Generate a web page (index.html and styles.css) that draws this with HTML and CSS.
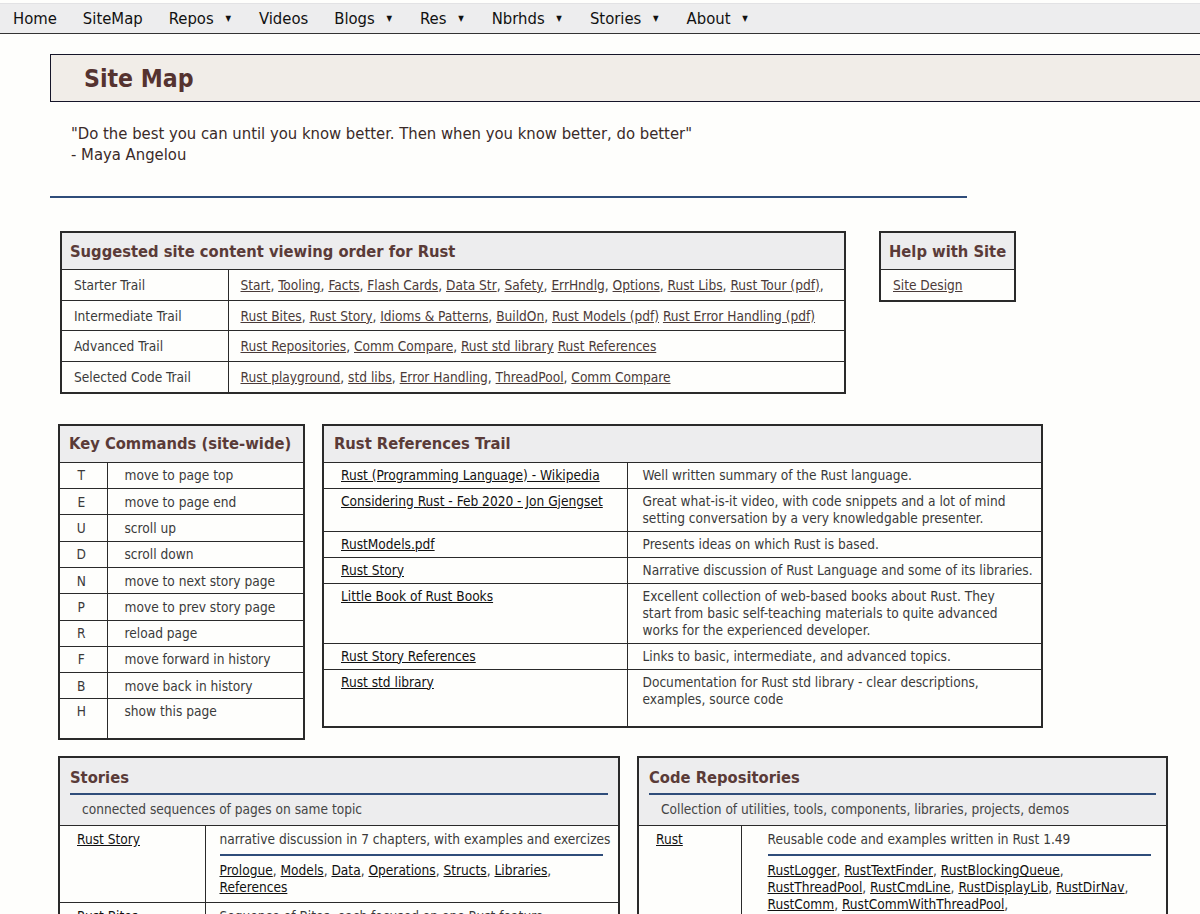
FILE: index.html
```html
<!DOCTYPE html>
<html lang="en">
<head>
<meta charset="utf-8">
<title>Site Map</title>
<link rel="stylesheet" href="styles.css">
</head>
<body>
<nav class="topnav">
  <a class="nav-item" href="#">Home</a>
  <a class="nav-item" href="#">SiteMap</a>
  <a class="nav-item" href="#">Repos <span class="caret">&#9660;</span></a>
  <a class="nav-item" href="#">Videos</a>
  <a class="nav-item" href="#">Blogs <span class="caret">&#9660;</span></a>
  <a class="nav-item" href="#">Res <span class="caret">&#9660;</span></a>
  <a class="nav-item" href="#">Nbrhds <span class="caret">&#9660;</span></a>
  <a class="nav-item" href="#">Stories <span class="caret">&#9660;</span></a>
  <a class="nav-item" href="#">About <span class="caret">&#9660;</span></a>
</nav>
<main class="page">
  <header class="title-box"><h1>Site Map</h1></header>
  <div class="quote">"Do the best you can until you know better. Then when you know better, do better"<br>- Maya Angelou</div>
  <hr class="rule">

  <div class="row row-first">
    <table class="box trail">
      <colgroup><col class="col-trail-1"><col></colgroup>
      <tr><th colspan="2">Suggested site content viewing order for Rust</th></tr>
      <tr><td class="c1">Starter Trail</td><td class="c2"><a href="#">Start</a>, <a href="#">Tooling</a>, <a href="#">Facts</a>, <a href="#">Flash Cards</a>, <a href="#">Data Str</a>, <a href="#">Safety</a>, <a href="#">ErrHndlg</a>, <a href="#">Options</a>, <a href="#">Rust Libs</a>, <a href="#">Rust Tour (pdf)</a>,</td></tr>
      <tr><td class="c1">Intermediate Trail</td><td class="c2"><a href="#">Rust Bites</a>, <a href="#">Rust Story</a>, <a href="#">Idioms &amp; Patterns</a>, <a href="#">BuildOn</a>, <a href="#">Rust Models (pdf)</a> <a href="#">Rust Error Handling (pdf)</a></td></tr>
      <tr><td class="c1">Advanced Trail</td><td class="c2"><a href="#">Rust Repositories</a>, <a href="#">Comm Compare</a>, <a href="#">Rust std library</a> <a href="#">Rust References</a></td></tr>
      <tr><td class="c1">Selected Code Trail</td><td class="c2"><a href="#">Rust playground</a>, <a href="#">std libs</a>, <a href="#">Error Handling</a>, <a href="#">ThreadPool</a>, <a href="#">Comm Compare</a></td></tr>
    </table>
    <table class="box help">
      <tr><th>Help with Site</th></tr>
      <tr><td class="c2"><a href="#">Site Design</a></td></tr>
    </table>
  </div>

  <div class="row row-second">
    <table class="box keys">
      <colgroup><col class="col-key-1"><col></colgroup>
      <tr><th colspan="2">Key Commands (site-wide)</th></tr>
      <tr><td class="k">T</td><td class="kd">move to page top</td></tr>
      <tr><td class="k">E</td><td class="kd">move to page end</td></tr>
      <tr><td class="k">U</td><td class="kd">scroll up</td></tr>
      <tr><td class="k">D</td><td class="kd">scroll down</td></tr>
      <tr><td class="k">N</td><td class="kd">move to next story page</td></tr>
      <tr><td class="k">P</td><td class="kd">move to prev story page</td></tr>
      <tr><td class="k">R</td><td class="kd">reload page</td></tr>
      <tr><td class="k">F</td><td class="kd">move forward in history</td></tr>
      <tr><td class="k">B</td><td class="kd">move back in history</td></tr>
      <tr><td class="k last">H</td><td class="kd last">show this page</td></tr>
    </table>
    <table class="box refs">
      <colgroup><col class="col-ref-1"><col></colgroup>
      <tr><th colspan="2">Rust References Trail</th></tr>
      <tr><td class="r1"><a class="dark" href="#">Rust (Programming Language) - Wikipedia</a></td><td class="r2">Well written summary of the Rust language.</td></tr>
      <tr><td class="r1"><a class="dark" href="#">Considering Rust - Feb 2020 - Jon Gjengset</a></td><td class="r2">Great what-is-it video, with code snippets and a lot of mind<br>setting conversation by a very knowledgable presenter.</td></tr>
      <tr><td class="r1"><a class="dark" href="#">RustModels.pdf</a></td><td class="r2">Presents ideas on which Rust is based.</td></tr>
      <tr><td class="r1"><a class="dark" href="#">Rust Story</a></td><td class="r2">Narrative discussion of Rust Language and some of its libraries.</td></tr>
      <tr><td class="r1"><a class="dark" href="#">Little Book of Rust Books</a></td><td class="r2">Excellent collection of web-based books about Rust. They<br>start from basic self-teaching materials to quite advanced<br>works for the experienced developer.</td></tr>
      <tr><td class="r1"><a class="dark" href="#">Rust Story References</a></td><td class="r2">Links to basic, intermediate, and advanced topics.</td></tr>
      <tr><td class="r1 last"><a class="dark" href="#">Rust std library</a></td><td class="r2 last">Documentation for Rust std library - clear descriptions,<br>examples, source code</td></tr>
    </table>
  </div>

  <div class="row row-third">
    <table class="box group stories">
      <colgroup><col class="col-story-1"><col></colgroup>
      <tr><th colspan="2"><div class="gtitle">Stories</div><div class="gsub">connected sequences of pages on same topic</div></th></tr>
      <tr><td class="g1"><a class="dark" href="#">Rust Story</a></td><td class="g2"><div class="gdesc">narrative discussion in 7 chapters, with examples and exercizes</div><div class="glinks"><a class="dark" href="#">Prologue</a>, <a class="dark" href="#">Models</a>, <a class="dark" href="#">Data</a>, <a class="dark" href="#">Operations</a>, <a class="dark" href="#">Structs</a>, <a class="dark" href="#">Libraries</a>, <a class="dark" href="#">References</a></div></td></tr>
      <tr><td class="g1"><a class="dark" href="#">Rust Bites</a></td><td class="g2"><div class="gdesc">Sequence of Bites, each focused on one Rust feature</div></td></tr>
    </table>
    <table class="box group repos">
      <colgroup><col class="col-repo-1"><col></colgroup>
      <tr><th colspan="2"><div class="gtitle">Code Repositories</div><div class="gsub">Collection of utilities, tools, components, libraries, projects, demos</div></th></tr>
      <tr><td class="g1"><a class="dark" href="#">Rust</a></td><td class="g2"><div class="gdesc">Reusable code and examples written in Rust 1.49</div><div class="glinks"><a class="dark" href="#">RustLogger</a>, <a class="dark" href="#">RustTextFinder</a>, <a class="dark" href="#">RustBlockingQueue</a>, <a class="dark" href="#">RustThreadPool</a>, <a class="dark" href="#">RustCmdLine</a>, <a class="dark" href="#">RustDisplayLib</a>, <a class="dark" href="#">RustDirNav</a>, <a class="dark" href="#">RustComm</a>, <a class="dark" href="#">RustCommWithThreadPool</a>,</div></td></tr>
    </table>
  </div>
</main>
</body>
</html>
```

FILE: styles.css
```css
html {
  overflow-x: hidden;
}
body {
  margin: 0;
  background: #fefefc;
  font-family: "DejaVu Sans Condensed", "DejaVu Sans", sans-serif;
  color: #333;
}
.topnav {
  display: flex;
  align-items: center;
  height: 29px;
  margin-top: 3px;
  border-top: 1px solid #e2e2e4;
  border-bottom: 1px solid #333;
  background: #ededee;
}
.nav-item {
  font-size: 16.5px;
  color: #111;
  text-decoration: none;
  padding: 0 13px;
  line-height: 29px;
  white-space: nowrap;
}
.caret {
  font-size: 8px;
  vertical-align: 3px;
  margin-left: 7px;
  margin-right: 2px;
}
.page {
  padding-left: 50px;
}
.title-box {
  margin-top: 20px;
  height: 46px;
  width: 1200px;
  background: #f1ede8;
  border: 1px solid #151528;
  display: flex;
  align-items: center;
}
.title-box h1 {
  margin: 0 0 0 33px;
  font-size: 24.6px;
  font-weight: bold;
  color: #553330;
}
.quote {
  margin: 21px 0 0 21px;
  font-size: 16.5px;
  line-height: 21px;
  color: #3a2a28;
}
.rule {
  margin: 31px 0 0 0;
  width: 917px;
  border: 0;
  height: 2px;
  background: #2f4d7a;
}
.row {
  display: flex;
  align-items: flex-start;
}
.row-first {
  margin-top: 33px;
  margin-left: 10px;
  gap: 33px;
}
.row-second {
  margin-top: 30px;
  margin-left: 8px;
  gap: 17px;
}
.row-third {
  margin-top: 16px;
  margin-left: 8px;
  gap: 17px;
}
.box {
  border-collapse: collapse;
  table-layout: fixed;
  border: 2px solid #2a2a2a;
  background: #fefefc;
  font-size: 13.6px;
  color: #3a3a3a;
}
.box th {
  background: #ededee;
  color: #5a3b38;
  font-size: 16.4px;
  font-weight: bold;
  text-align: left;
  height: 36px;
  padding: 0 8px;
  white-space: nowrap;
  border-bottom: 1px solid #2a2a2a;
}
.box td {
  border: 1px solid #2a2a2a;
  vertical-align: top;
}
.box a {
  color: #4a3a38;
}
.box a.dark {
  color: #111;
}
.trail {
  width: 786px;
}
.col-trail-1 {
  width: 167px;
}
.trail td {
  height: 29.7px;
  padding: 0 12px;
  vertical-align: middle;
  white-space: nowrap;
}
.help {
  width: 137px;
}
.help td {
  height: 29.7px;
  padding: 0 12px;
  vertical-align: middle;
}
.keys {
  width: 247px;
}
.col-key-1 {
  width: 48px;
}
.keys th {
  padding: 0 6px 0 9px;
}
.keys td {
  height: 25.3px;
  padding: 0;
  vertical-align: middle;
}
.keys td.k {
  text-align: center;
  padding-right: 4px;
}
.keys td.kd {
  padding-left: 17px;
}
.keys td.last {
  height: 35px;
  vertical-align: top;
  padding-top: 4px;
}
.refs {
  width: 721px;
}
.col-ref-1 {
  width: 304px;
}
.refs th {
  padding-left: 10px;
}
.refs td {
  padding: 4px 12px 4px 17px;
  line-height: 17px;
}
.refs td.r2 {
  padding-left: 15px;
  padding-right: 2px;
}
.refs td.last {
  height: 48px;
}
.group th {
  padding: 0 10px;
  height: auto;
}
.gtitle {
  padding: 10px 0 6px 0;
  border-bottom: 2px solid #2f4d7a;
}
.gsub {
  font-size: 13.6px;
  font-weight: normal;
  color: #444;
  padding: 6px 0 8px 12px;
}
.stories {
  width: 562px;
}
.col-story-1 {
  width: 146px;
}
.repos {
  width: 531px;
}
.col-repo-1 {
  width: 103px;
}
.group td.g1 {
  padding: 5px 0 0 17px;
}
.group td.g2 {
  padding: 5px 15px 6px 14px;
  line-height: 17px;
}
.repos td.g2 {
  padding-left: 26px;
}
.gdesc {
  padding-bottom: 6px;
  border-bottom: 2px solid #2f4d7a;
  margin-bottom: 6px;
  white-space: nowrap;
}
.glinks {
  line-height: 17px;
}
```
